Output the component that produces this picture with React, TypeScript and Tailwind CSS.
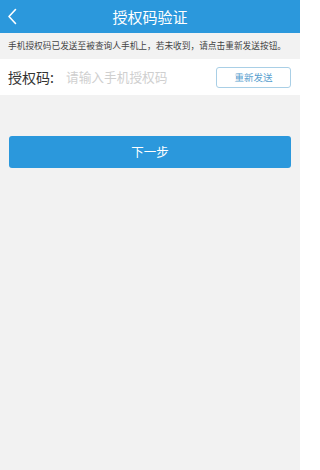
export default function App() {
  return (
    <main
      className="min-h-[470px] w-[300px] bg-[#f2f2f2]"
      style={{ fontFamily: '"Noto Sans CJK SC", "Liberation Sans", sans-serif' }}
    >
      <header className="relative flex h-[33px] items-center justify-center bg-[#2b98dc]">
        <svg
          className="absolute left-[7px] top-[8px]"
          width="10"
          height="17"
          viewBox="0 0 10 17"
          fill="none"
        >
          <path d="M8.5 1.5L2 8.5l6.5 7" stroke="white" strokeWidth="1.6" strokeLinecap="round" strokeLinejoin="round" />
        </svg>
        <h1 className="text-[15px] leading-none text-white">授权码验证</h1>
      </header>

      <div className="flex h-[26px] items-center whitespace-nowrap px-[8px] text-[8.7px] text-[#444]">
        手机授权码已发送至被查询人手机上，若未收到，请点击重新发送按钮。
      </div>

      <div className="flex h-[36px] items-center bg-white pl-[8px] pr-[9px]">
        <span className="w-[58px] text-[14px] text-[#333]">授权码:</span>
        <input
          className="min-w-0 flex-1 bg-transparent text-[12.7px] text-[#333] outline-none placeholder:text-[#cfcfcf]"
          placeholder="请输入手机授权码"
        />
        <button
          type="button"
          className="h-[21px] w-[75px] rounded-[3px] border border-[#a9cfe6] text-[9.5px] text-[#5a9fcf]"
        >
          重新发送
        </button>
      </div>

      <div className="px-[9px] pt-[41px]">
        <button
          type="button"
          className="h-[32px] w-full rounded-[3px] bg-[#2b98dc] text-[12.5px] text-white"
        >
          下一步
        </button>
      </div>
    </main>
  );
}
